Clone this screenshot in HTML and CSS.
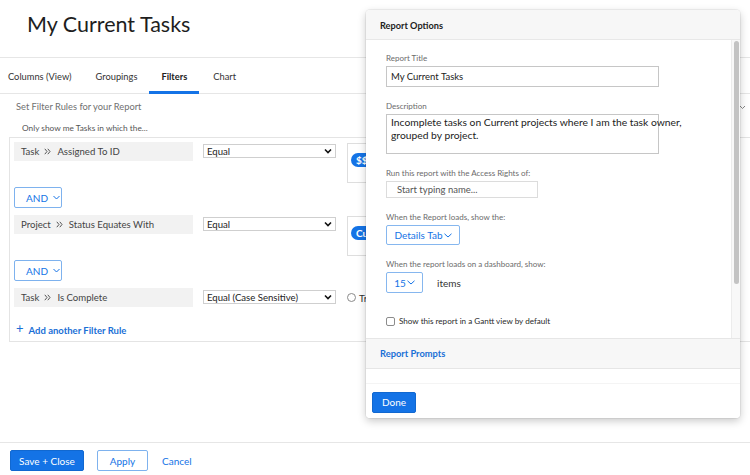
FILE: index.html
```html
<!DOCTYPE html>
<html>
<head>
<meta charset="utf-8">
<title>My Current Tasks</title>
<link rel="stylesheet" href="styles.css">
</head>
<body>
<div class="page">
  <header class="page-header">
    <h1 class="page-title">My Current Tasks</h1>
  </header>
  <nav class="tabs">
    <a class="tab">Columns (View)</a>
    <a class="tab">Groupings</a>
    <a class="tab active">Filters</a>
    <a class="tab">Chart</a>
  </nav>
  <main class="content">
    <div class="section-head">
      <span class="section-title">Set Filter Rules for your Report</span>
      <svg class="collapse" width="7" height="5" viewBox="0 0 7 5"><polyline points="1,1 3.5,3.5 6,1" fill="none" stroke="#888" stroke-width="1"/></svg>
    </div>
    <div class="intro">Only show me Tasks in which the...</div>
    <div class="filter-box">
      <div class="rule">
        <div class="field">Task<svg class="sep" width="7" height="7" viewBox="0 0 7 7"><polyline points="0.8,0.8 3,3.5 0.8,6.2" fill="none" stroke="#555" stroke-width="1"/><polyline points="3.8,0.8 6,3.5 3.8,6.2" fill="none" stroke="#555" stroke-width="1"/></svg>Assigned To ID</div>
        <div class="select">Equal<svg class="sel-chev" width="8" height="6" viewBox="0 0 8 6"><polyline points="1,1.5 4,4.5 7,1.5" fill="none" stroke="#111" stroke-width="1.6"/></svg></div>
        <div class="value"><span class="chip">$$USER.ID</span></div>
      </div>
      <button class="and-btn">AND<svg width="7" height="5" viewBox="0 0 7 5"><polyline points="0.5,1 3.5,4 6.5,1" fill="none" stroke="#1473e6" stroke-width="1"/></svg></button>
      <div class="rule">
        <div class="field">Project<svg class="sep" width="7" height="7" viewBox="0 0 7 7"><polyline points="0.8,0.8 3,3.5 0.8,6.2" fill="none" stroke="#555" stroke-width="1"/><polyline points="3.8,0.8 6,3.5 3.8,6.2" fill="none" stroke="#555" stroke-width="1"/></svg>Status Equates With</div>
        <div class="select">Equal<svg class="sel-chev" width="8" height="6" viewBox="0 0 8 6"><polyline points="1,1.5 4,4.5 7,1.5" fill="none" stroke="#111" stroke-width="1.6"/></svg></div>
        <div class="value"><span class="chip">Current</span></div>
      </div>
      <button class="and-btn">AND<svg width="7" height="5" viewBox="0 0 7 5"><polyline points="0.5,1 3.5,4 6.5,1" fill="none" stroke="#1473e6" stroke-width="1"/></svg></button>
      <div class="rule">
        <div class="field">Task<svg class="sep" width="7" height="7" viewBox="0 0 7 7"><polyline points="0.8,0.8 3,3.5 0.8,6.2" fill="none" stroke="#555" stroke-width="1"/><polyline points="3.8,0.8 6,3.5 3.8,6.2" fill="none" stroke="#555" stroke-width="1"/></svg>Is Complete</div>
        <div class="select">Equal (Case Sensitive)<svg class="sel-chev" width="8" height="6" viewBox="0 0 8 6"><polyline points="1,1.5 4,4.5 7,1.5" fill="none" stroke="#111" stroke-width="1.6"/></svg></div>
        <label class="radio"><span class="radio-dot"></span>True</label>
      </div>
      <div class="add-rule"><span class="plus">+</span>Add another Filter Rule</div>
    </div>
  </main>
  <footer class="footer">
    <button class="btn btn-primary">Save + Close</button>
    <button class="btn btn-outline">Apply</button>
    <button class="btn btn-link">Cancel</button>
  </footer>
</div>

<section class="panel">
  <div class="panel-header">Report Options</div>
  <div class="panel-body">
    <div class="panel-scroll">
      <div class="opt">
        <div class="opt-label">Report Title</div>
        <div class="input">My Current Tasks</div>
      </div>
      <div class="opt">
        <div class="opt-label">Description</div>
        <div class="textarea">Incomplete tasks on Current projects where I am the task owner,<br>grouped by project.</div>
      </div>
      <div class="opt">
        <div class="opt-label">Run this report with the Access Rights of:</div>
        <div class="input input-small">Start typing name...</div>
      </div>
      <div class="opt">
        <div class="opt-label">When the Report loads, show the:</div>
        <button class="drop-btn drop-wide">Details Tab<svg width="8" height="5" viewBox="0 0 8 5"><polyline points="0.5,0.8 4,4 7.5,0.8" fill="none" stroke="#1473e6" stroke-width="1"/></svg></button>
      </div>
      <div class="opt">
        <div class="opt-label">When the report loads on a dashboard, show:</div>
        <div class="items-row">
          <button class="drop-btn drop-num">15<svg width="8" height="5" viewBox="0 0 8 5"><polyline points="0.5,0.8 4,4 7.5,0.8" fill="none" stroke="#1473e6" stroke-width="1"/></svg></button>
          <span class="items-label">items</span>
        </div>
      </div>
      <label class="check-row"><span class="checkbox"></span>Show this report in a Gantt view by default</label>
    </div>
    <div class="scroll-track"><div class="scroll-thumb"></div></div>
  </div>
  <div class="panel-prompts">Report Prompts</div>
  <div class="panel-spacer"></div>
  <div class="panel-footer">
    <button class="btn btn-primary btn-done">Done</button>
  </div>
</section>
</body>
</html>
```

FILE: styles.css
```css
* { box-sizing: border-box; }

html, body {
  margin: 0;
  padding: 0;
}

body {
  width: 750px;
  height: 475px;
  overflow: hidden;
  position: relative;
  background: #fff;
  font-family: Lato, "Liberation Sans", Arial, sans-serif;
  color: #2c2c2c;
}

button {
  font-family: inherit;
  cursor: pointer;
}

.page {
  display: flex;
  flex-direction: column;
  height: 475px;
}

/* ---------- header ---------- */
.page-header {
  height: 58px;
  border-bottom: 1px solid #e6e6e6;
  padding-left: 27px;
}

.page-title {
  margin: 0;
  padding-top: 10px;
  font-size: 21.5px;
  line-height: 28px;
  font-weight: 400;
  color: #1e1e1e;
}

/* ---------- tabs ---------- */
.tabs {
  display: flex;
  height: 36px;
  border-bottom: 1px solid #e6e6e6;
}

.tab {
  display: flex;
  align-items: center;
  height: 36px;
  padding: 0 12px;
  margin-bottom: -1px;
  font-size: 9.3px;
  color: #333;
  border-bottom: 3px solid transparent;
  padding-top: 3px;
}

.tab:first-child { padding-left: 8px; }

.tab.active {
  font-weight: 700;
  color: #222;
  border-bottom-color: #1473e6;
}

.tab:last-child { padding-left: 14px; }

/* ---------- content ---------- */
.section-head {
  display: flex;
  justify-content: space-between;
  align-items: center;
  height: 20px;
  padding: 6px 4px 0 16px;
}

.section-title {
  font-size: 9.3px;
  line-height: 14px;
  color: #707070;
}

.intro {
  margin-top: 8px;
  padding-left: 22px;
  font-size: 8.3px;
  line-height: 12px;
  color: #555;
}

.filter-box {
  margin: 3px -12px 0 9px;
  border: 1px solid #e4e4e4;
  padding: 4px 0 4px 4px;
}

.rule {
  display: flex;
  align-items: flex-start;
}

.field {
  display: flex;
  align-items: center;
  width: 179px;
  height: 19px;
  background: #f2f2f2;
  padding-left: 7px;
  font-size: 9.6px;
  color: #444;
}

.sep {
  margin: 0 6px 0 5px;
}

.select {
  display: flex;
  align-items: center;
  justify-content: space-between;
  width: 133px;
  height: 14px;
  margin: 2px 0 0 10px;
  border: 1px solid #cfcfcf;
  padding: 0 3px 0 3px;
  font-size: 9.6px;
  color: #222;
  background: #fff;
}

.value {
  width: 120px;
  height: 40px;
  margin: 1px 0 0 11px;
  border: 1px solid #dedede;
  padding: 4px 0 0 3px;
}

.chip {
  display: inline-block;
  height: 14px;
  line-height: 14px;
  padding: 0 8px 0 5px;
  border-radius: 7px;
  background: #1473e6;
  color: #fff;
  font-size: 10px;
  font-weight: 700;
}

.radio {
  display: flex;
  align-items: center;
  margin: 2px 0 0 11px;
  font-size: 10px;
  color: #333;
  height: 15px;
}

.radio-dot {
  width: 9px;
  height: 9px;
  border: 1px solid #8a8a8a;
  border-radius: 50%;
  margin-right: 3px;
}

.and-btn {
  display: flex;
  align-items: center;
  gap: 5px;
  width: 48px;
  height: 21px;
  margin: 4px 0 7px 0;
  padding: 0 0 0 11px;
  border: 1px solid #7eb2ee;
  border-radius: 2px;
  background: #fff;
  color: #1473e6;
  font-size: 10px;
}

.add-rule {
  display: flex;
  align-items: center;
  margin-top: 16px;
  height: 14px;
  padding-left: 2px;
  font-size: 9.5px;
  font-weight: 700;
  color: #1a6fd6;
}

.plus {
  font-size: 13px;
  font-weight: 400;
  margin-right: 5px;
  position: relative;
  top: -2px;
}

/* ---------- footer ---------- */
.footer {
  margin-top: auto;
  border-top: 1px solid #e6e6e6;
  height: 33px;
  padding: 7px 0 0 10px;
  display: flex;
  align-items: flex-start;
}

.btn {
  height: 21px;
  border-radius: 2px;
  font-size: 10px;
  padding: 0;
}

.btn-primary {
  width: 74px;
  background: #1473e6;
  border: 1px solid #1168d0;
  color: #fff;
}

.btn-outline {
  width: 51px;
  margin-left: 13px;
  background: #fff;
  border: 1px solid #7eb2ee;
  color: #1473e6;
}

.btn-link {
  margin-left: 14px;
  background: none;
  border: none;
  color: #1473e6;
}

/* ---------- panel ---------- */
.panel {
  position: absolute;
  left: 366px;
  top: 10px;
  width: 374px;
  height: 408px;
  background: #fff;
  border-radius: 4px;
  box-shadow: 0 0 0 1px rgba(0,0,0,0.05), 0 3px 9px rgba(0,0,0,0.22);
  display: flex;
  flex-direction: column;
  overflow: hidden;
}

.panel-header {
  height: 30px;
  flex: none;
  background: #f7f7f7;
  border-bottom: 1px solid #e8e8e8;
  padding-left: 14px;
  font-size: 9.2px;
  font-weight: 700;
  line-height: 31px;
  color: #222;
}

.panel-body {
  flex: none;
  height: 298px;
  display: flex;
}

.panel-scroll {
  flex: 1;
  padding: 12px 0 0 20px;
}

.opt {
  margin-bottom: 13px;
}

.opt-label {
  font-size: 8px;
  line-height: 12px;
  color: #6b6b6b;
  margin-bottom: 2px;
}

.input {
  width: 273px;
  height: 21px;
  border: 1px solid #c6c6c6;
  padding-left: 4px;
  font-size: 9.5px;
  line-height: 19px;
  color: #222;
}

.input-small {
  width: 152px;
  height: 17px;
  line-height: 15px;
  border-color: #dcdcdc;
  padding-left: 10px;
  color: #555;
}

.textarea {
  width: 273px;
  height: 40px;
  border: 1px solid #c6c6c6;
  padding: 1px 4px 0;
  font-size: 10.3px;
  line-height: 13px;
  color: #222;
  white-space: nowrap;
}

.drop-btn {
  display: flex;
  align-items: center;
  justify-content: center;
  gap: 1px;
  height: 21px;
  border: 1px solid #86b7ef;
  border-radius: 2px;
  background: #fff;
  color: #1473e6;
  font-size: 10px;
  padding: 0;
}

.drop-wide { width: 74px; height: 20px; }
.drop-num { width: 37px; }

.items-row {
  display: flex;
  align-items: center;
}

.items-label {
  margin-left: 14px;
  font-size: 10px;
  color: #333;
}

.check-row {
  display: flex;
  align-items: center;
  margin-top: 22px;
  font-size: 8.1px;
  line-height: 12px;
  color: #2a2a2a;
}

.checkbox {
  width: 9px;
  height: 9px;
  border: 1px solid #8c8c8c;
  border-radius: 2px;
  margin-right: 4px;
}

.scroll-track {
  width: 9px;
  flex: none;
  background: #f8f8f8;
  border-left: 1px solid #ececec;
  padding: 1px 0 0 2px;
}

.scroll-thumb {
  width: 5px;
  height: 243px;
  background: #c3c3c3;
  border-radius: 3px;
}

.panel-prompts {
  flex: none;
  height: 31px;
  background: #f7f7f7;
  border-top: 1px solid #e6e6e6;
  border-bottom: 1px solid #e6e6e6;
  padding-left: 14px;
  font-size: 9.3px;
  font-weight: 700;
  line-height: 29px;
  color: #1a6fd6;
}

.panel-spacer {
  flex: none;
  height: 14px;
}

.panel-footer {
  flex: 1;
  border-top: 1px solid #f4f4f4;
  background: #fff;
  padding: 6px 0 0 6px;
}

.btn-done {
  width: 44px;
}
```
